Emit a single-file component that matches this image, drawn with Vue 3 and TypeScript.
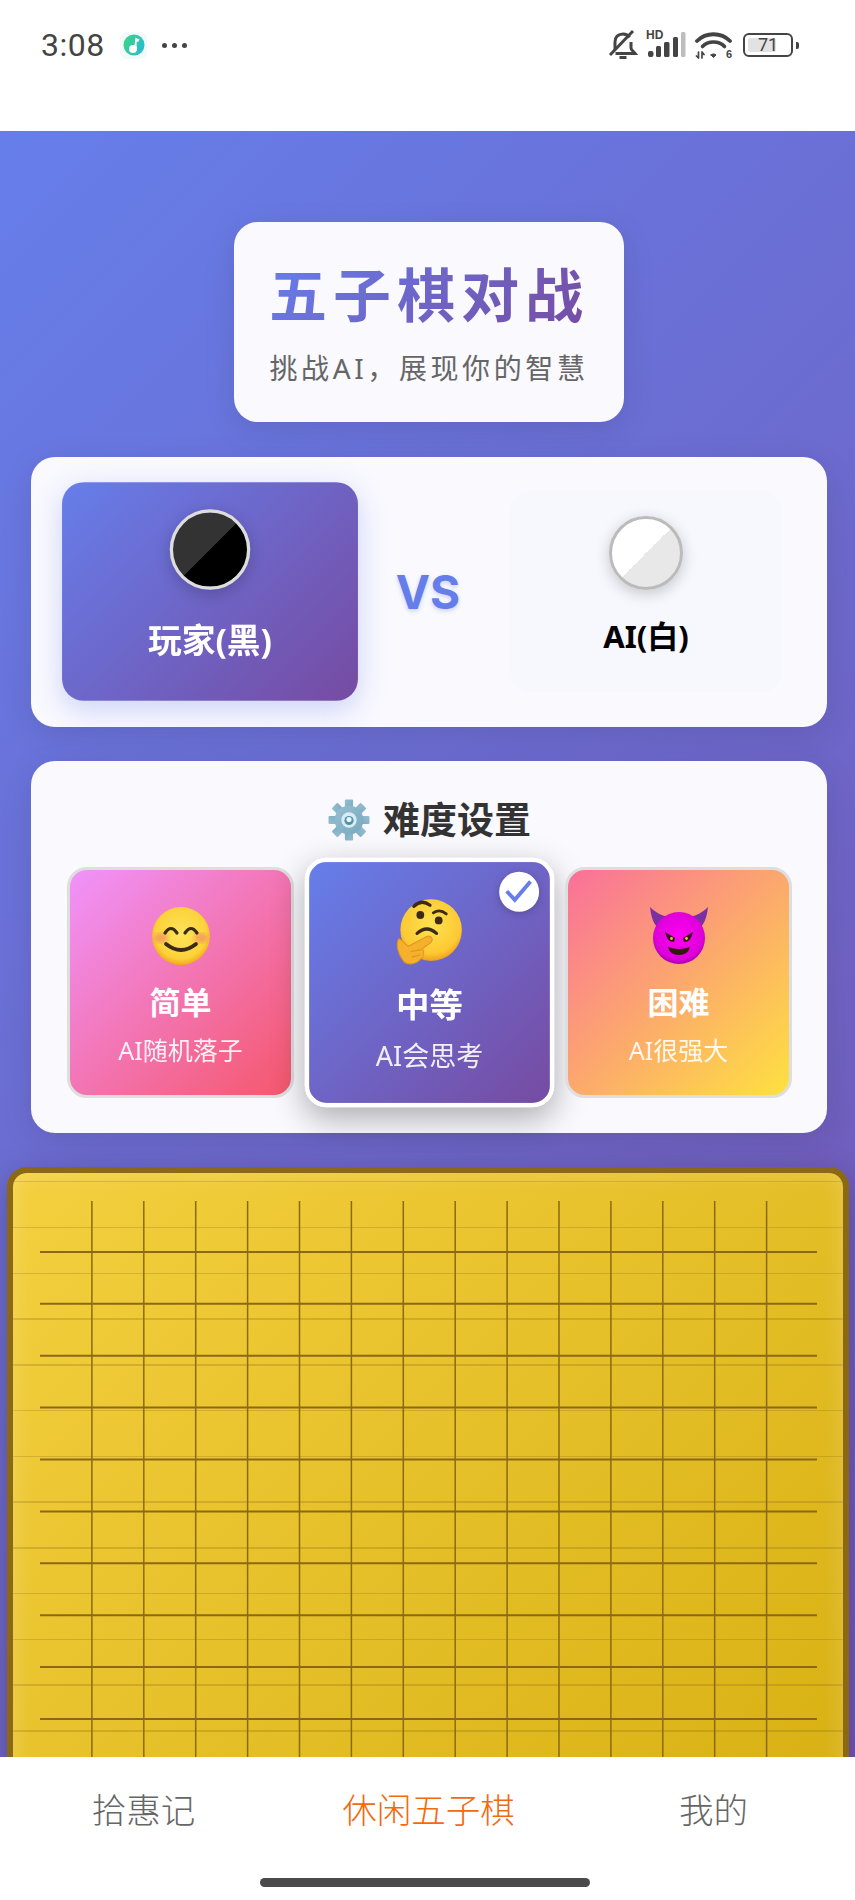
<script setup lang="ts">
interface Level {
  key: string;
  name: string;
  desc: string;
  active?: boolean;
}

const levels: Level[] = [
  { key: "easy", name: "简单", desc: "AI随机落子" },
  { key: "medium", name: "中等", desc: "AI会思考", active: true },
  { key: "hard", name: "困难", desc: "AI很强大" },
];

const tabs = ["拾惠记", "休闲五子棋", "我的"];
const cell = 51.9;
const gridLines = Array.from({ length: 14 }, (_, i) => (i + 1) * cell);
const gearTeeth = [0, 45, 90, 135, 180, 225, 270, 315];
</script>

<template>
  <div class="phone">
    <header class="status-bar">
      <div class="status-left">
        <span class="time">3:08</span>
        <span class="app-icon">
          <svg width="22" height="22" viewBox="0 0 22 22">
            <defs>
              <linearGradient id="music" x1="0" y1="0" x2="1" y2="0.4">
                <stop offset="0" stop-color="#3ad67f" />
                <stop offset="1" stop-color="#2bbdc9" />
              </linearGradient>
            </defs>
            <circle cx="11" cy="11" r="10.5" fill="url(#music)" />
            <circle cx="10" cy="15" r="4" fill="#fff" />
            <path d="M11 15 L12.5 3.5 L16.5 5.5 L15 8 L13.6 7.4 L13.6 15 Z" fill="#fff" />
          </svg>
        </span>
        <span class="dots"><i></i><i></i><i></i></span>
      </div>
      <div class="status-right">
        <svg width="30" height="32" viewBox="0 0 30 32" fill="none" stroke="#444" stroke-width="3">
          <path d="M7 21 V13 C7 8 10 5 15 5 C18 5 20 6 21.5 8.5 M23 13 V19 C23 21 25 22 27 24.5 H7.5" />
          <path d="M11.5 28.5 H18.5" />
          <path d="M2 26 L25 2" />
        </svg>
        <span class="signal">
          <span class="hd">HD</span>
          <svg width="40" height="28" viewBox="0 0 40 28">
            <rect x="2" y="20" width="5.5" height="6" rx="2" fill="#444" />
            <rect x="10" y="15" width="5" height="11" rx="1.5" fill="#444" />
            <rect x="18" y="11" width="5.5" height="15" rx="1.5" fill="#444" />
            <rect x="27" y="6" width="5" height="20" rx="1.5" fill="#444" />
            <rect x="35" y="1" width="4.5" height="25" rx="1.5" fill="#bdbdbd" />
          </svg>
        </span>
        <span class="wifi">
          <svg width="38" height="28" viewBox="0 0 38 28" fill="none" stroke="#444" stroke-linecap="round">
            <path d="M2 10 C11 1 26 1 35 10" stroke-width="3.8" />
            <path d="M7.5 15.5 C13 9.5 24 9.5 29.5 15.5" stroke-width="3.6" />
            <path d="M16 24 L18.5 26.5 L21 24 C19.5 22.5 17.5 22.5 16 24 Z" fill="#444" stroke="#444" stroke-width="1" />
            <path d="M3.5 21 V27 M1.5 25 L3.5 27 M7 27 V21 M7 21 L9 23.5" stroke-width="1.7" />
          </svg>
          <span class="wifi-six">6</span>
        </span>
        <span class="battery">
          <span class="battery-level"></span>
          <span class="battery-text">71</span>
        </span>
        <span class="battery-nub"></span>
      </div>
    </header>

    <main class="game">
      <section class="title-card">
        <h1 class="title">五子棋对战</h1>
        <p class="subtitle">挑战AI，展现你的智慧</p>
      </section>

      <section class="versus-card">
        <div class="player player-active">
          <div class="stone stone-black"></div>
          <div class="player-name">玩家(黑)</div>
        </div>
        <div class="vs">VS</div>
        <div class="player">
          <div class="stone stone-white"></div>
          <div class="player-name">AI(白)</div>
        </div>
      </section>

      <section class="level-card">
        <h2 class="level-heading">
          <svg class="gear" width="42" height="42" viewBox="0 0 41 41">
            <defs>
              <linearGradient id="gearFill" x1="0" y1="0" x2="1" y2="1">
                <stop offset="0" stop-color="#97bfd0" />
                <stop offset="1" stop-color="#78a9c0" />
              </linearGradient>
            </defs>
            <rect
              v-for="deg in gearTeeth"
              :key="deg"
              x="16.5"
              y="0.5"
              width="8"
              height="10"
              rx="1"
              fill="url(#gearFill)"
              :transform="`rotate(${deg} 20.5 20.5)`"
            />
            <circle cx="20.5" cy="20.5" r="14" fill="url(#gearFill)" />
            <circle cx="20.5" cy="20.5" r="7.5" fill="#dcebf1" />
            <circle cx="20.5" cy="21" r="4.5" fill="#4c93ad" />
            <circle cx="20.5" cy="20" r="2.5" fill="#eef5f8" />
          </svg>
          <span>难度设置</span>
        </h2>

        <div class="levels">
          <div
            v-for="level in levels"
            :key="level.key"
            class="level"
            :class="[`level-${level.key}`, { 'level-active': level.active }]"
          >
            <svg v-if="level.key === 'easy'" class="emoji" viewBox="0 0 60 60">
              <defs>
                <radialGradient id="smileFace" cx="0.5" cy="0.45" r="0.55">
                  <stop offset="0" stop-color="#fee45a" />
                  <stop offset="0.8" stop-color="#fcd23a" />
                  <stop offset="1" stop-color="#f2a91c" />
                </radialGradient>
                <filter id="soft"><feGaussianBlur stdDeviation="2" /></filter>
              </defs>
              <circle cx="30" cy="30" r="29" fill="url(#smileFace)" />
              <ellipse cx="10" cy="32" rx="7" ry="5" fill="#f0876a" opacity="0.65" filter="url(#soft)" />
              <ellipse cx="50" cy="32" rx="7" ry="5" fill="#f0876a" opacity="0.65" filter="url(#soft)" />
              <path d="M14 27 Q20 18 26 27 M34 27 Q40 18 46 27" fill="none" stroke="#3b2a14" stroke-width="3.2" stroke-linecap="round" />
              <path d="M15 38 Q30 50 45 38" fill="none" stroke="#3b2a14" stroke-width="3.8" stroke-linecap="round" />
            </svg>

            <svg v-else-if="level.key === 'medium'" class="emoji" viewBox="0 0 60 60">
              <defs>
                <radialGradient id="thinkFace" cx="0.5" cy="0.4" r="0.6">
                  <stop offset="0" stop-color="#fee24f" />
                  <stop offset="0.8" stop-color="#fcc934" />
                  <stop offset="1" stop-color="#f29f1c" />
                </radialGradient>
              </defs>
              <circle cx="31" cy="28" r="28.5" fill="url(#thinkFace)" />
              <path d="M15 6 Q22 -1 30 5" fill="none" stroke="#3b2a14" stroke-width="3" stroke-linecap="round" />
              <path d="M33 12 Q39 8 45 13" fill="none" stroke="#3b2a14" stroke-width="2.6" stroke-linecap="round" />
              <circle cx="21" cy="14" r="3.6" fill="#3b2a14" />
              <circle cx="38" cy="19" r="3.6" fill="#3b2a14" />
              <path d="M18 31 Q27 23 36 31" fill="none" stroke="#3b2a14" stroke-width="3" stroke-linecap="round" />
              <path
                d="M1 36 C4 37 7 41 10 43 L27 34 C31 32 34 37 30 40 L23 45 C25 49 24 53 21 55 C17 60 8 61 5 56 C1 51 -2 42 1 36 Z"
                fill="#f6b12c"
                stroke="#e2951d"
                stroke-width="1"
              />
              <path d="M12 48 L22 46 M13 53 L21 51" stroke="#e2951d" stroke-width="1.2" fill="none" />
            </svg>

            <svg v-else class="emoji" viewBox="0 0 60 60">
              <defs>
                <radialGradient id="devilFace" cx="0.5" cy="0.45" r="0.55">
                  <stop offset="0" stop-color="#ff00f5" />
                  <stop offset="0.85" stop-color="#dd00d8" />
                  <stop offset="1" stop-color="#a800a8" />
                </radialGradient>
              </defs>
              <path d="M1 1 C2 11 5 20 12 25 L24 11 C14 11 7 7 1 1 Z" fill="#7b2fa3" />
              <path d="M59 1 C58 11 55 20 48 25 L36 11 C46 11 53 7 59 1 Z" fill="#7b2fa3" />
              <circle cx="30" cy="32" r="26" fill="url(#devilFace)" />
              <path d="M16 26 L26 32 L25 36 Q18 36 16 26 Z" fill="#33190f" />
              <path d="M44 26 L34 32 L35 36 Q42 36 44 26 Z" fill="#33190f" />
              <circle cx="22.5" cy="32.5" r="1.4" fill="#e8c13a" />
              <circle cx="37.5" cy="32.5" r="1.4" fill="#e8c13a" />
              <path d="M19 41 Q30 45 41 41 Q39 49 30 49 Q21 49 19 41 Z" fill="#33190f" />
            </svg>

            <div class="level-name">{{ level.name }}</div>
            <div class="level-desc">{{ level.desc }}</div>
            <span v-if="level.active" class="level-check">
              <svg width="37" height="37" viewBox="0 0 37 37" fill="none">
                <path d="M7 18 L14.5 26 L29 9" stroke="#667eea" stroke-width="3.6" />
              </svg>
            </span>
          </div>
        </div>
      </section>

      <section class="board">
        <svg class="board-lines" width="777" height="778" viewBox="0 0 777 778">
          <line v-for="x in gridLines" :key="`v${x}`" class="line-v" :x1="x" y1="1" :x2="x" y2="778" />
          <line v-for="y in gridLines" :key="`h${y}`" class="line-h" x1="0" :y1="y" x2="777" :y2="y" />
        </svg>
      </section>
    </main>

    <nav class="tab-bar">
      <div class="tabs">
        <div v-for="(tab, i) in tabs" :key="tab" class="tab" :class="{ 'tab-active': i === 1 }">{{ tab }}</div>
      </div>
      <div class="home-bar"></div>
    </nav>
  </div>
</template>

<style>
html,
body {
  margin: 0;
  background: #fff;
}
</style>

<style scoped>
.phone {
  width: 855px;
  height: 1900px;
  overflow: hidden;
  background: #fff;
  font-family: "Noto Sans", "Noto Sans CJK SC", sans-serif;
}

.status-bar {
  height: 131px;
  box-sizing: border-box;
  padding: 27px 56px 0 41px;
  display: flex;
  justify-content: space-between;
  align-items: flex-start;
}

.status-left {
  display: flex;
  align-items: center;
  height: 36px;
}

.time {
  font-family: Roboto, sans-serif;
  font-size: 32px;
  color: #444;
  width: 79px;
  letter-spacing: 0.5px;
}

.app-icon {
  width: 27px;
  height: 27px;
  border-radius: 7px;
  background: #f3f8fb;
  display: flex;
  align-items: center;
  justify-content: center;
}

.dots {
  display: flex;
  gap: 5px;
  margin-left: 15px;
}

.dots i {
  width: 5px;
  height: 5px;
  border-radius: 50%;
  background: #444;
}

.status-right {
  display: flex;
  align-items: center;
  height: 36px;
}

.status-right svg {
  display: block;
}

.status-right > svg {
  margin-right: 8px;
}

.signal {
  position: relative;
  margin-right: 9px;
}

.hd {
  position: absolute;
  left: 0;
  top: -2px;
  font-family: "Liberation Sans", sans-serif;
  font-size: 12px;
  line-height: 12px;
  font-weight: 700;
  color: #444;
}

.wifi {
  position: relative;
  margin-right: 7px;
}

.wifi-six {
  position: absolute;
  right: 1px;
  bottom: -1px;
  font-family: "Liberation Sans", sans-serif;
  font-size: 11px;
  line-height: 11px;
  font-weight: 700;
  color: #444;
}

.battery {
  position: relative;
  width: 50px;
  height: 24px;
  box-sizing: border-box;
  border: 2px solid #444;
  border-radius: 6px;
  margin-left: 3px;
  padding: 3px;
}

.battery-level {
  display: block;
  width: 71%;
  height: 100%;
  background: #e2e2e2;
  border-radius: 2px;
}

.battery-text {
  position: absolute;
  inset: 0;
  text-align: center;
  font-family: Roboto, sans-serif;
  font-size: 18px;
  line-height: 20px;
  color: #444;
}

.battery-nub {
  width: 3px;
  height: 7px;
  background: #444;
  border-radius: 0 2px 2px 0;
  margin-left: 3px;
}

.game {
  height: 1626px;
  box-sizing: border-box;
  overflow: hidden;
  padding-top: 91px;
  background: linear-gradient(135deg, #667eea 0%, #764ba2 100%) top left / 100% 2186px no-repeat;
}

.title-card {
  width: 390px;
  height: 200px;
  box-sizing: border-box;
  margin: 0 0 0 234px;
  padding-top: 37px;
  background: #f9f9fe;
  border-radius: 24px;
  box-shadow: 0 8px 32px rgba(0, 0, 0, 0.1);
  text-align: center;
}

.title {
  display: inline-block;
  margin: 0;
  font-size: 58px;
  line-height: 72px;
  font-weight: 700;
  letter-spacing: 6px;
  background: linear-gradient(135deg, #667eea, #764ba2);
  -webkit-background-clip: text;
  background-clip: text;
  color: transparent;
}

.subtitle {
  margin: 16px 0 0;
  font-size: 28px;
  line-height: 42px;
  letter-spacing: 3.6px;
  color: #666;
}

.versus-card {
  height: 270px;
  box-sizing: border-box;
  margin: 35px 28px 0 31px;
  padding: 34px 45px 35px 43px;
  display: flex;
  justify-content: space-between;
  align-items: center;
  background: #f9f9fe;
  border-radius: 24px;
  box-shadow: 0 8px 32px rgba(0, 0, 0, 0.1);
}

.player {
  width: 272px;
  height: 201px;
  box-sizing: border-box;
  padding-top: 25px;
  display: flex;
  flex-direction: column;
  align-items: center;
  border-radius: 20px;
  background: #f7f8fd;
  color: #000;
}

.player-active {
  background: linear-gradient(135deg, #667eea, #764ba2);
  color: #fff;
  transform: scale(1.088);
  box-shadow: 0 8px 25px rgba(102, 126, 234, 0.3);
}

.stone {
  width: 74px;
  height: 74px;
  box-sizing: border-box;
  border-radius: 50%;
  box-shadow: 0 4px 15px rgba(0, 0, 0, 0.2);
}

.stone-black {
  border: 3px solid #ddd;
  background: linear-gradient(135deg, #333 50%, #000 50%);
}

.stone-white {
  border: 3px solid #bbb;
  background: linear-gradient(135deg, #fff 50%, #e8e8e8 50%);
}

.player-name {
  margin-top: 26px;
  font-size: 31px;
  line-height: 40px;
  font-weight: 700;
}

.vs {
  font-family: Inter, sans-serif;
  font-size: 46px;
  font-weight: 700;
  color: #667eea;
  text-shadow: 0 2px 4px rgba(102, 126, 234, 0.3);
}

.level-card {
  height: 372px;
  box-sizing: border-box;
  margin: 34px 28px 0 31px;
  padding: 35px 35px 0 36px;
  background: #f9f9fe;
  border-radius: 24px;
  box-shadow: 0 8px 32px rgba(0, 0, 0, 0.1);
}

.level-heading {
  margin: 0 0 23px;
  display: flex;
  justify-content: center;
  align-items: center;
  gap: 13px;
  height: 48px;
  font-size: 37px;
  line-height: 48px;
  font-weight: 700;
  color: #333;
}

.levels {
  display: grid;
  grid-template-columns: 227px 231px 227px;
  gap: 20px;
}

.level {
  position: relative;
  height: 231px;
  box-sizing: border-box;
  padding-top: 36px;
  display: flex;
  flex-direction: column;
  align-items: center;
  border: 3px solid #dedede;
  border-radius: 20px;
  color: #fff;
}

.level-easy {
  background: linear-gradient(135deg, #f093fb, #f5576c);
}

.level-medium {
  background: linear-gradient(135deg, #667eea, #764ba2);
}

.level-hard {
  background: linear-gradient(135deg, #fa709a, #fee140);
}

.level-active {
  border: 4px solid #fff;
  padding-top: 35px;
  transform: scale(1.08);
  box-shadow: 0 10px 30px rgba(0, 0, 0, 0.3);
}

.emoji {
  width: 60px;
  height: 60px;
  flex: none;
  overflow: visible;
}

.level-name {
  margin-top: 16px;
  font-size: 31px;
  line-height: 40px;
  font-weight: 700;
}

.level-desc {
  margin-top: 11px;
  font-size: 25px;
  line-height: 34px;
  opacity: 0.9;
}

.level-check {
  position: absolute;
  top: 9px;
  right: 10px;
  width: 37px;
  height: 37px;
  border-radius: 50%;
  background: #fff;
  box-shadow: 0 2px 8px rgba(0, 0, 0, 0.2);
}

.level-check svg {
  display: block;
}

.board {
  width: 842px;
  height: 842px;
  box-sizing: border-box;
  margin: 34px 0 0 7px;
  padding: 27px 27px 0;
  border: 6px solid #8b6914;
  border-radius: 20px;
  background:
    repeating-linear-gradient(
      180deg,
      transparent 0,
      transparent 8px,
      rgba(139, 105, 20, 0.28) 8px,
      rgba(139, 105, 20, 0.28) 9.5px,
      transparent 9.5px,
      transparent 45.75px
    ),
    linear-gradient(135deg, #f4d03f, #d4ac0d);
  box-shadow:
    0 8px 32px rgba(0, 0, 0, 0.22),
    inset 0 0 22px rgba(255, 255, 255, 0.22);
}

.board-lines {
  display: block;
}

.line-v {
  stroke: #8b6914;
  stroke-width: 1.5;
}

.line-h {
  stroke: #8b6914;
  stroke-width: 2;
}

.tab-bar {
  height: 143px;
  background: #fff;
}

.tabs {
  display: grid;
  grid-template-columns: repeat(3, 285px);
  padding: 29px 0 0 1px;
}

.tab {
  text-align: center;
  font-size: 34.5px;
  line-height: 48px;
  color: #666;
  font-weight: 300;
}

.tab-active {
  color: #f26a0d;
}

.home-bar {
  width: 330px;
  height: 9px;
  margin: 44px 0 0 260px;
  border-radius: 5px;
  background: #4a4a4a;
}
</style>
